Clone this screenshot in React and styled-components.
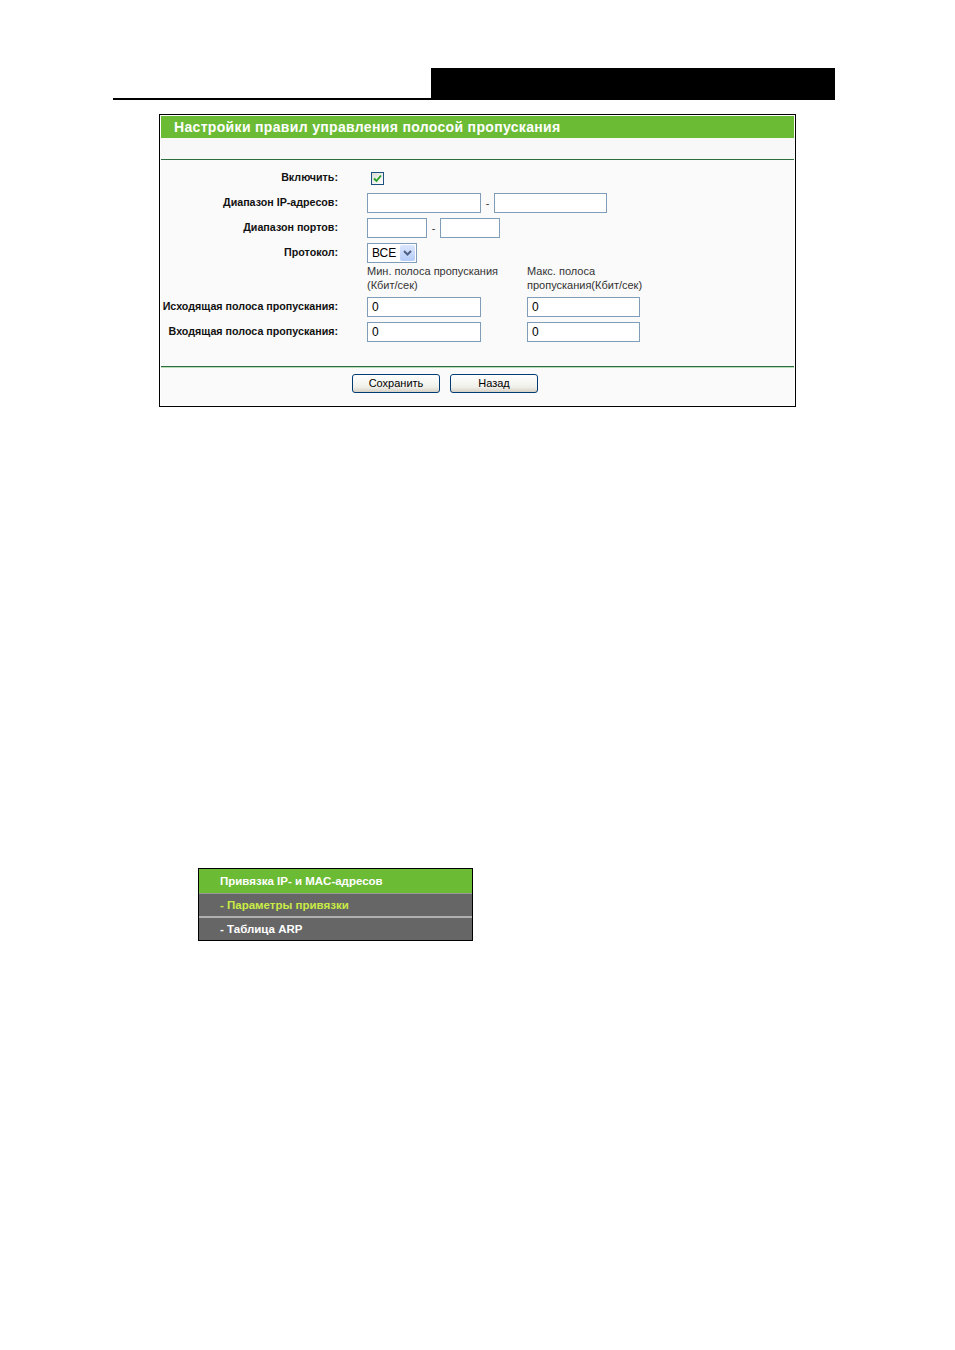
import React from "react";
import styled, { createGlobalStyle } from "styled-components";

const GlobalStyle = createGlobalStyle`
  html, body {
    margin: 0;
    padding: 0;
    background: #fff;
  }
  body {
    font-family: "Liberation Sans", Arial, sans-serif;
    color: #000;
  }
`;

const Page = styled.div`
  width: 955px;
  height: 1350px;
  padding-top: 68px;
  box-sizing: border-box;
`;

const Header = styled.header`
  display: flex;
  margin-left: 113px;
  width: 722px;
  height: 32px;
`;

const HeaderRule = styled.div`
  flex: 1;
  align-self: flex-end;
  border-bottom: 2px solid #000;
`;

const HeaderBlock = styled.div`
  width: 404px;
  background: #000;
`;

const Panel = styled.section`
  margin: 14px 0 0 159px;
  width: 637px;
  height: 293px;
  box-sizing: border-box;
  border: 1px solid #000;
  padding: 1px;
  background: #fff;
  display: flex;
  flex-direction: column;
`;

const PanelTitle = styled.h2`
  margin: 0;
  height: 22px;
  background: #6bbb35;
  color: #fff;
  font-size: 14px;
  font-weight: 700;
  line-height: 22px;
  padding-left: 13px;
  letter-spacing: 0.33px;
  white-space: nowrap;
`;

const Band = styled.div`
  height: 21px;
  background: #f8f8f8;
  border-bottom: 1px solid #2e6e3e;
  box-shadow: 0 1px 0 #b8dcb8;
`;

const Body = styled.div`
  flex: 1;
  background: #fafafa;
  padding: 6px 0 0;
  display: grid;
  grid-template-columns: 178px 1fr;
  grid-template-rows: 24px 25px 25px 25px 29px 25px 25px;
  align-items: center;
  border-bottom: 1px solid #2e6e3e;
  box-shadow: 0 1px 0 #b8dcb8;
`;

const Label = styled.label`
  font-size: 10.7px;
  font-weight: 700;
  text-align: right;
  white-space: nowrap;
  color: #111;
  padding-right: 1px;
  margin-top: -2px;
`;

const Field = styled.div`
  display: flex;
  align-items: center;
  padding-left: 28px;
`;

const Columns = styled.div`
  display: grid;
  grid-template-columns: 160px 1fr;
  align-items: center;
  padding-left: 28px;
`;

const ColHead = styled.div`
  grid-column: 2;
  align-self: start;
  font-size: 11px;
  line-height: 14px;
  color: #333;
  padding-left: 28px;
  display: grid;
  grid-template-columns: 160px 130px;
  margin-top: -1px;
`;

const Input = styled.div`
  width: ${(p) => p.$w}px;
  height: 20px;
  box-sizing: border-box;
  border: 1px solid #7f9db9;
  background: #fff;
  font-size: 12px;
  line-height: 18px;
  padding-left: 4px;
  font-family: "Liberation Sans", Arial, sans-serif;
`;

const Dash = styled.span`
  font-size: 11px;
  color: #333;
  width: ${(p) => p.$w}px;
  text-align: center;
`;

const Check = styled.span`
  display: inline-flex;
  margin-left: 4px;
  width: 13px;
  height: 13px;
  box-sizing: border-box;
  border: 1px solid #1c5180;
  background: linear-gradient(135deg, #dcdcd7, #fff);
  align-items: center;
  justify-content: center;
`;

const Select = styled.div`
  width: 50px;
  height: 20px;
  box-sizing: border-box;
  border: 1px solid #7f9db9;
  background: #fff;
  display: flex;
  align-items: center;
  justify-content: space-between;
  padding: 1px;
  font-size: 12px;
`;

const SelectText = styled.span`
  padding-left: 3px;
`;

const SelectArrow = styled.span`
  width: 15px;
  height: 16px;
  background: linear-gradient(#dbe6fd, #b5cbf7);
  border-radius: 2px;
  display: flex;
  align-items: center;
  justify-content: center;
`;

const Footer = styled.div`
  height: 37px;
  background: #fafafa;
  margin-top: 1px;
  display: flex;
  gap: 10px;
  padding: 6px 0 0 191px;
  box-sizing: border-box;
`;

const Button = styled.button`
  width: 88px;
  height: 19px;
  box-sizing: border-box;
  border: 1px solid #003c74;
  border-radius: 3px;
  background: linear-gradient(#ffffff, #f0f0ea 70%, #d6d0c5);
  font-family: "Liberation Sans", Arial, sans-serif;
  font-size: 11px;
  color: #000;
  padding: 0;
  line-height: 17px;
`;

const Menu = styled.nav`
  margin: 461px 0 0 198px;
  width: 275px;
  box-sizing: border-box;
  border: 1px solid #000;
  background: #666;
`;

const MenuItem = styled.div`
  height: ${(p) => (p.$head ? 24 : 22)}px;
  line-height: ${(p) => (p.$head ? 24 : 22)}px;
  padding-left: 21px;
  font-size: 11.5px;
  font-weight: 700;
  color: ${(p) => (p.$active ? "#c9ec45" : "#fff")};
  background: ${(p) => (p.$head ? "#6bbb35" : "#666")};
  border-top: ${(p) => p.$sep || "none"};
`;

const Tick = () => (
  <svg width="9" height="9" viewBox="0 0 9 9">
    <path d="M1 4.5 L3.5 7 L8 1.5" fill="none" stroke="#21a121" strokeWidth="1.8" />
  </svg>
);

const Chevron = () => (
  <svg width="9" height="6" viewBox="0 0 9 6">
    <path d="M1 1 L4.5 4.5 L8 1" fill="none" stroke="#4d6185" strokeWidth="2" />
  </svg>
);

export default function App() {
  return (
    <Page>
      <GlobalStyle />
      <Header>
        <HeaderRule />
        <HeaderBlock />
      </Header>

      <Panel>
        <PanelTitle>Настройки правил управления полосой пропускания</PanelTitle>
        <Band />
        <Body>
          <Label>Включить:</Label>
          <Field>
            <Check>
              <Tick />
            </Check>
          </Field>

          <Label>Диапазон IP-адресов:</Label>
          <Field>
            <Input $w={114} />
            <Dash $w={13}>-</Dash>
            <Input $w={113} />
          </Field>

          <Label>Диапазон портов:</Label>
          <Field>
            <Input $w={60} />
            <Dash $w={13}>-</Dash>
            <Input $w={60} />
          </Field>

          <Label>Протокол:</Label>
          <Field>
            <Select>
              <SelectText>ВСЕ</SelectText>
              <SelectArrow>
                <Chevron />
              </SelectArrow>
            </Select>
          </Field>

          <span />
          <ColHead>
            <span>
              Мин. полоса пропускания
              <br />
              (Кбит/сек)
            </span>
            <span>
              Макс. полоса
              <br />
              пропускания(Кбит/сек)
            </span>
          </ColHead>

          <Label>Исходящая полоса пропускания:</Label>
          <Columns>
            <Input $w={114}>0</Input>
            <Input $w={113}>0</Input>
          </Columns>

          <Label>Входящая полоса пропускания:</Label>
          <Columns>
            <Input $w={114}>0</Input>
            <Input $w={113}>0</Input>
          </Columns>
        </Body>
        <Footer>
          <Button>Сохранить</Button>
          <Button>Назад</Button>
        </Footer>
      </Panel>

      <Menu>
        <MenuItem $head>Привязка IP- и MAC-адресов</MenuItem>
        <MenuItem $active $sep="1px solid #999">- Параметры привязки</MenuItem>
        <MenuItem $sep="2px solid #b0b0b0">- Таблица ARP</MenuItem>
      </Menu>
    </Page>
  );
}
